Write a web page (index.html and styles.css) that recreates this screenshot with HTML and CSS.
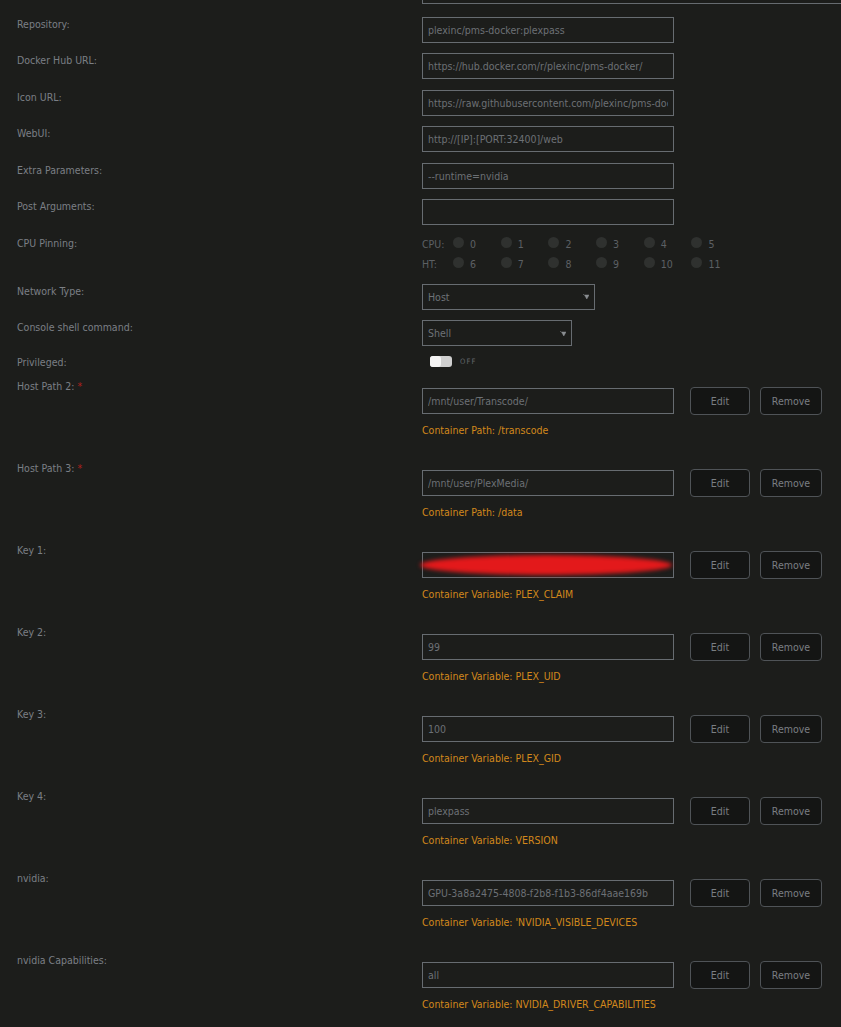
FILE: index.html
```html
<!DOCTYPE html>
<html lang="en">
<head>
 <meta charset="UTF-8">
 <title>Update Container</title>
 <link rel="stylesheet" href="styles.css">
</head>
<body>
 <div class="form">
  <div class="prev-field"><div class="prev-box"></div></div>

  <div class="row">
   <div class="label">Repository:</div>
   <div class="field"><input class="text" type="text" value="plexinc/pms-docker:plexpass"></div>
  </div>
  <div class="row">
   <div class="label">Docker Hub URL:</div>
   <div class="field"><input class="text" type="text" value="https://hub.docker.com/r/plexinc/pms-docker/"></div>
  </div>
  <div class="row">
   <div class="label">Icon URL:</div>
   <div class="field"><input class="text" type="text" value="https://raw.githubusercontent.com/plexinc/pms-docker/master/img/plex-server.png"></div>
  </div>
  <div class="row">
   <div class="label">WebUI:</div>
   <div class="field"><input class="text" type="text" value="http://[IP]:[PORT:32400]/web"></div>
  </div>
  <div class="row">
   <div class="label">Extra Parameters:</div>
   <div class="field"><input class="text" type="text" value="--runtime=nvidia"></div>
  </div>
  <div class="row">
   <div class="label">Post Arguments:</div>
   <div class="field"><input class="text" type="text" value=""></div>
  </div>

  <div class="row cpu-row">
   <div class="label">CPU Pinning:</div>
   <div class="field">
    <div class="cpu-line">
     <span class="cpu-name">CPU:</span>
     <span class="cpu"><i class="dot"></i>0</span>
     <span class="cpu"><i class="dot"></i>1</span>
     <span class="cpu"><i class="dot"></i>2</span>
     <span class="cpu"><i class="dot"></i>3</span>
     <span class="cpu"><i class="dot"></i>4</span>
     <span class="cpu"><i class="dot"></i>5</span>
    </div>
    <div class="cpu-line">
     <span class="cpu-name">HT:</span>
     <span class="cpu"><i class="dot"></i>6</span>
     <span class="cpu"><i class="dot"></i>7</span>
     <span class="cpu"><i class="dot"></i>8</span>
     <span class="cpu"><i class="dot"></i>9</span>
     <span class="cpu"><i class="dot"></i>10</span>
     <span class="cpu"><i class="dot"></i>11</span>
    </div>
   </div>
  </div>

  <div class="row">
   <div class="label">Network Type:</div>
   <div class="field">
    <div class="select net">
     <span>Host</span>
     <svg class="caret" width="6" height="6" viewBox="0 0 6 6"><path d="M0 0.5h1.2M1.5 1L3.8 5 6 1z" fill="#8a8e92" stroke="#8a8e92" stroke-width="0.5"/></svg>
    </div>
   </div>
  </div>
  <div class="row">
   <div class="label">Console shell command:</div>
   <div class="field">
    <div class="select shell">
     <span>Shell</span>
     <svg class="caret" width="6" height="6" viewBox="0 0 6 6"><path d="M0 0.5h1.2M1.5 1L3.8 5 6 1z" fill="#8a8e92" stroke="#8a8e92" stroke-width="0.5"/></svg>
    </div>
   </div>
  </div>
  <div class="row priv-row">
   <div class="label">Privileged:</div>
   <div class="field">
    <div class="switch"><span class="track"><span class="knob"></span></span><span class="switch-text">OFF</span></div>
   </div>
  </div>

  <div class="path-row">
   <div class="label">Host Path 2: <span class="req">*</span></div>
   <div class="field">
    <div class="path-line">
     <input class="text" type="text" value="/mnt/user/Transcode/">
     <button class="btn edit">Edit</button>
     <button class="btn remove">Remove</button>
    </div>
    <div class="target">Container Path: /transcode</div>
   </div>
  </div>
  <div class="path-row">
   <div class="label">Host Path 3: <span class="req">*</span></div>
   <div class="field">
    <div class="path-line">
     <input class="text" type="text" value="/mnt/user/PlexMedia/">
     <button class="btn edit">Edit</button>
     <button class="btn remove">Remove</button>
    </div>
    <div class="target">Container Path: /data</div>
   </div>
  </div>
  <div class="path-row">
   <div class="label">Key 1:</div>
   <div class="field">
    <div class="path-line">
     <div class="hidden-wrap">
      <input class="text" type="text" value="">
      <span class="redact"></span>
     </div>
     <button class="btn edit">Edit</button>
     <button class="btn remove">Remove</button>
    </div>
    <div class="target">Container Variable: PLEX_CLAIM</div>
   </div>
  </div>
  <div class="path-row">
   <div class="label">Key 2:</div>
   <div class="field">
    <div class="path-line">
     <input class="text" type="text" value="99">
     <button class="btn edit">Edit</button>
     <button class="btn remove">Remove</button>
    </div>
    <div class="target">Container Variable: PLEX_UID</div>
   </div>
  </div>
  <div class="path-row">
   <div class="label">Key 3:</div>
   <div class="field">
    <div class="path-line">
     <input class="text" type="text" value="100">
     <button class="btn edit">Edit</button>
     <button class="btn remove">Remove</button>
    </div>
    <div class="target">Container Variable: PLEX_GID</div>
   </div>
  </div>
  <div class="path-row">
   <div class="label">Key 4:</div>
   <div class="field">
    <div class="path-line">
     <input class="text" type="text" value="plexpass">
     <button class="btn edit">Edit</button>
     <button class="btn remove">Remove</button>
    </div>
    <div class="target">Container Variable: VERSION</div>
   </div>
  </div>
  <div class="path-row">
   <div class="label">nvidia:</div>
   <div class="field">
    <div class="path-line">
     <input class="text" type="text" value="GPU-3a8a2475-4808-f2b8-f1b3-86df4aae169b">
     <button class="btn edit">Edit</button>
     <button class="btn remove">Remove</button>
    </div>
    <div class="target">Container Variable: 'NVIDIA_VISIBLE_DEVICES</div>
   </div>
  </div>
  <div class="path-row">
   <div class="label">nvidia Capabilities:</div>
   <div class="field">
    <div class="path-line">
     <input class="text" type="text" value="all">
     <button class="btn edit">Edit</button>
     <button class="btn remove">Remove</button>
    </div>
    <div class="target">Container Variable: NVIDIA_DRIVER_CAPABILITIES</div>
   </div>
  </div>
 </div>
</body>
</html>
```

FILE: styles.css
```css
body {
  margin: 0;
  background-color: #1c1d1b;
  font-family: "Liberation Sans Narrow", "DejaVu Sans Condensed", Roboto, sans-serif;
  font-size: 10.5px;
  color: #7b7f85;
  overflow: hidden;
}

.form {
  padding-left: 17px;
}

.prev-field {
  padding-left: 405px;
  height: 4px;
  margin-bottom: 13px;
}

.prev-box {
  height: 3px;
  border-left: 1px solid #666b70;
  border-bottom: 1px solid #666b70;
}

.row {
  display: grid;
  grid-template-columns: 405px 1fr;
  align-items: start;
  margin-bottom: 10.4px;
}

.label {
  line-height: 14px;
  white-space: nowrap;
}

.req {
  color: #b0201d;
}

.text {
  box-sizing: border-box;
  width: 252px;
  height: 26px;
  margin: 0;
  padding: 0 5px;
  border: 1px solid #676c71;
  background-color: transparent;
  color: #6c7075;
  font-family: inherit;
  font-size: 10.5px;
  outline: none;
}

/* cpu pinning */
.cpu-row {
  margin-top: -1px;
  margin-bottom: 9.4px;
}

.cpu-row .label {
  padding-top: 2px;
}

.cpu-line {
  display: flex;
  align-items: center;
  height: 20px;
  color: #5c6064;
}

.cpu-name {
  width: 31px;
}

.cpu {
  display: flex;
  align-items: center;
  width: 47.7px;
}

.dot {
  width: 11px;
  height: 11px;
  border-radius: 50%;
  background-color: #2f312f;
  margin-right: 6px;
  margin-top: -4px;
}

/* selects */
.select {
  box-sizing: border-box;
  height: 26px;
  border: 1px solid #676c71;
  display: flex;
  align-items: center;
  justify-content: space-between;
  padding: 0 5px 0 5px;
  color: #6e7277;
}

.select.net {
  width: 173px;
}

.select.shell {
  width: 150px;
}

.caret {
  margin-top: 1px;
}

/* switch */
.priv-row {
  margin-top: -2px;
  margin-bottom: 10px;
}

.switch {
  display: flex;
  align-items: center;
  height: 14px;
  padding-left: 8px;
}

.track {
  display: inline-block;
  width: 22px;
  height: 11px;
  border-radius: 3px;
  background-color: #cfcfcf;
  position: relative;
}

.knob {
  position: absolute;
  left: 0;
  top: 0;
  width: 11px;
  height: 11px;
  border-radius: 3px;
  background-color: #f4f4f4;
}

.switch-text {
  margin-left: 8px;
  font-size: 7.5px;
  letter-spacing: 1.2px;
  color: #62666a;
}

/* path / variable rows */
.path-row {
  display: grid;
  grid-template-columns: 405px 1fr;
  height: 82px;
}

.path-line {
  display: flex;
  align-items: center;
  margin-top: 8px;
}

.btn {
  box-sizing: border-box;
  height: 28px;
  margin: 0;
  border: 1px solid #4f5357;
  border-radius: 4px;
  background-color: #141514;
  color: #7a7e82;
  font-family: inherit;
  font-size: 10.5px;
  padding: 0;
}

.btn.edit {
  width: 60px;
  margin-left: 16px;
}

.btn.remove {
  width: 62px;
  margin-left: 10px;
}

.target {
  margin-top: 8px;
  line-height: 14px;
  color: #d2881c;
}

.hidden-wrap {
  position: relative;
}

.redact {
  position: absolute;
  left: -2px;
  top: 3px;
  width: 252px;
  height: 20px;
  border-radius: 50%;
  background-color: #e3191b;
  filter: blur(2px);
}
```
